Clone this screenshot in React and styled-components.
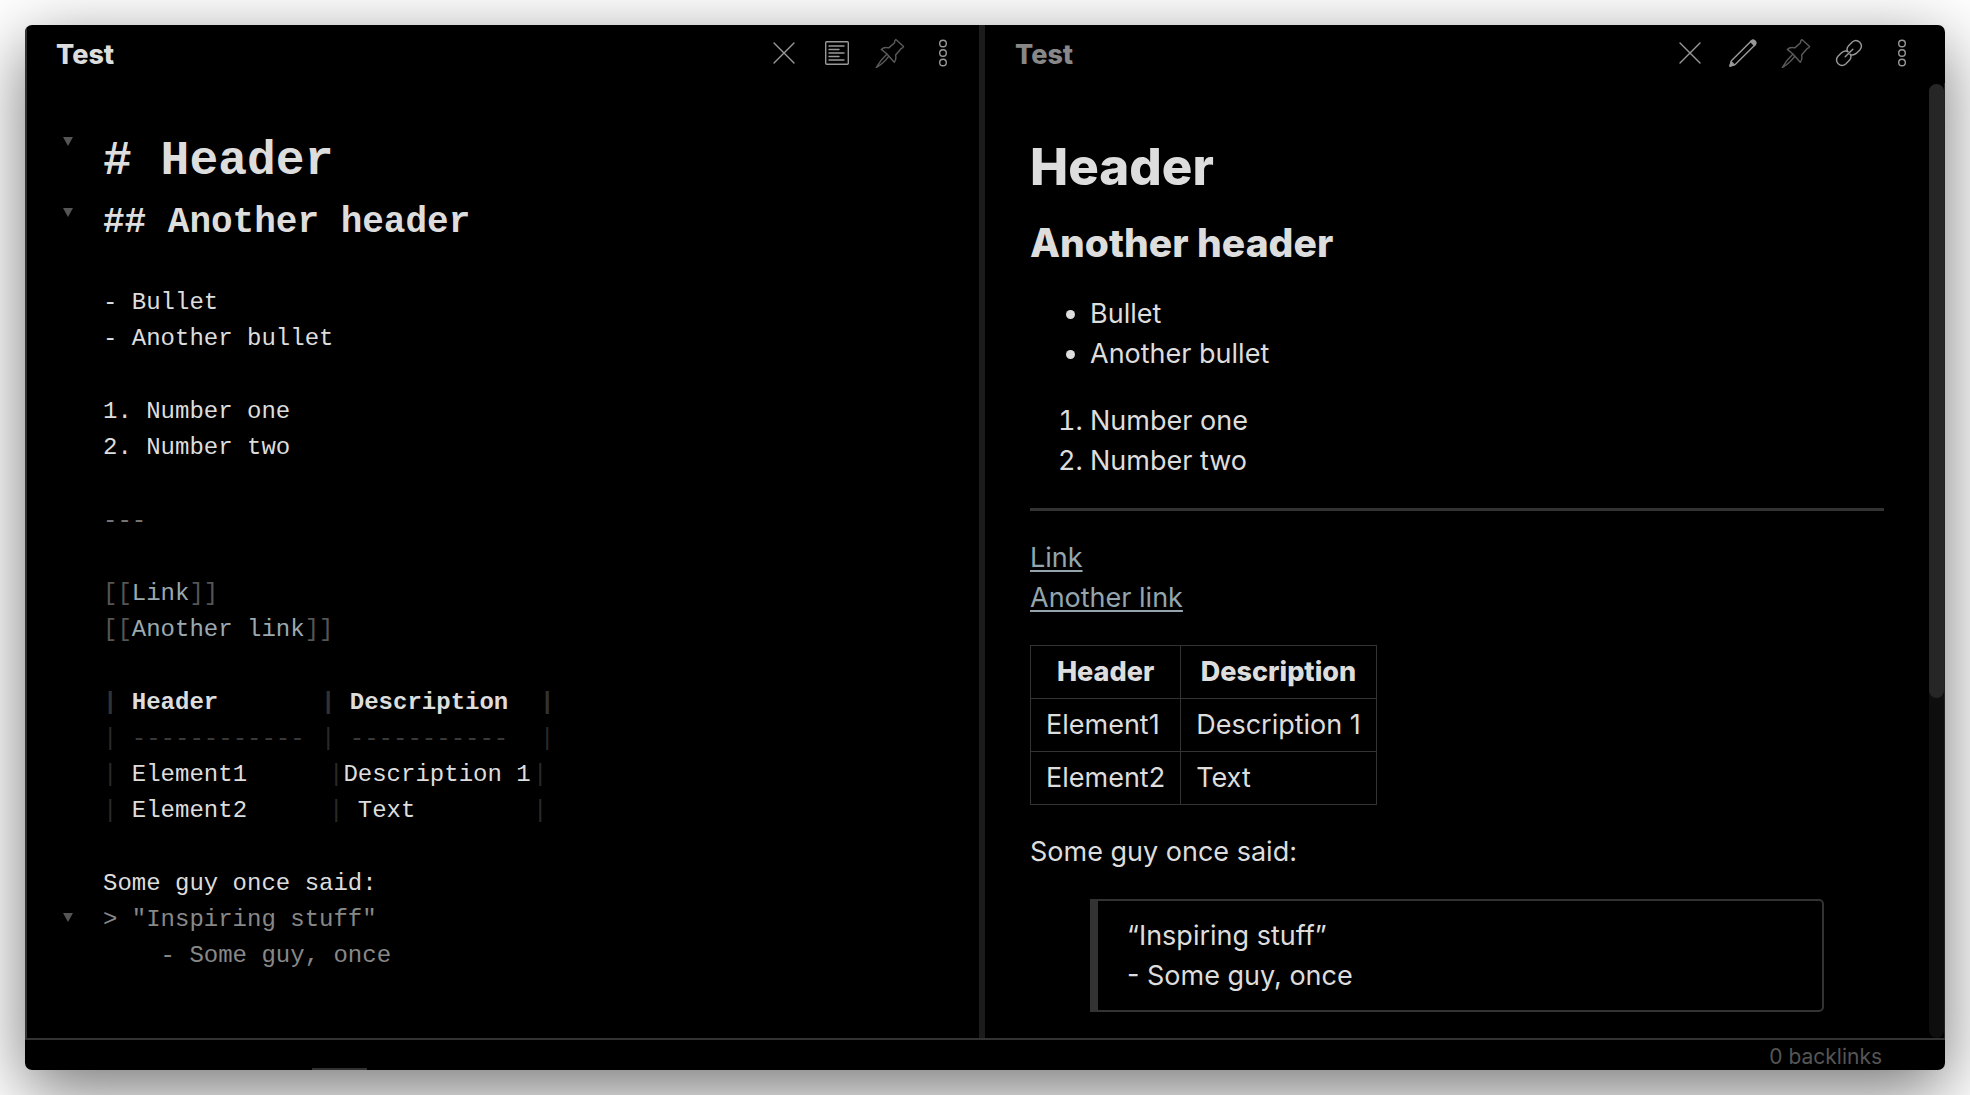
import React from "react";
import styled, { createGlobalStyle } from "styled-components";

const line = "#333333";
const text = "#dddddd";
const sans = `Inter, "Liberation Sans", sans-serif`;
const mono = `"Liberation Mono", "DejaVu Sans Mono", monospace`;

const GlobalStyle = createGlobalStyle`
  *, *::before, *::after { box-sizing: border-box; }
  body { margin: 0; background: #ffffff; font-family: ${sans}; color: ${text}; }
`;

const Page = styled.div`
  display: flex;
  min-height: 100vh;
  padding: 25px;
  overflow: hidden;
`;

const Window = styled.div`
  display: flex;
  flex: 1;
  flex-direction: column;
  overflow: hidden;
  border-radius: 7px;
  background: #000000;
`;

const Shadow = styled.div`
  display: flex;
  flex: 1;
  min-width: 0;
  border-radius: 7px;
  box-shadow: 0 20px 68px rgba(0, 0, 0, 0.55);
`;

const Workspace = styled.main`
  display: grid;
  flex: 1;
  grid-template-columns: 954fr 6px 960fr;
`;

const Divider = styled.div`
  background: #1c1c1c;
`;

const Pane = styled.section`
  display: flex;
  flex-direction: column;
  min-width: 0;
  border-left: ${(p) => (p.$edge ? `2px solid ${line}` : "0")};
`;

const PaneHeader = styled.header`
  display: flex;
  align-items: center;
  justify-content: space-between;
  height: 58px;
  padding: 0 ${(p) => p.$right}px 0 ${(p) => p.$left}px;
`;

const PaneTitle = styled.h2`
  margin: 0;
  padding-top: 2px;
  font-size: 27px;
  line-height: 32px;
  font-weight: 800;
  color: ${(p) => (p.$active ? text : "#888888")};
`;

const Actions = styled.div`
  display: flex;
  gap: 23px;
  padding-bottom: 2px;
`;

const IconButton = styled.button`
  display: flex;
  padding: 0;
  border: 0;
  background: none;
  color: ${(p) => (p.$dim ? "#5a5a5a" : "#999999")};
  cursor: pointer;
`;

const Icon = styled.svg`
  width: 30px;
  height: 30px;
  fill: none;
  stroke: currentColor;
  stroke-width: 1.4;
  stroke-linejoin: round;
  stroke-linecap: round;
`;

const Editor = styled.div`
  padding: 43px 36px 40px;
  font-family: ${mono};
  font-size: 24px;
  line-height: 36px;
`;

const lineStyles = {
  h1: "font-size: 48px; line-height: 71px; font-weight: 700;",
  h2: "font-size: 36px; line-height: 51px; font-weight: 700;",
  quote: "color: #888888;",
  rule: "color: #777777;",
  blank: "height: 37px;",
};

const Line = styled.div`
  display: flex;
  align-items: flex-start;
  white-space: pre;
  ${(p) => lineStyles[p.$kind] || ""}
`;

const Gutter = styled.div`
  flex: none;
  width: 40px;
  padding-top: 11px;
`;

const Fold = styled.button`
  display: block;
  width: 10px;
  height: 9px;
  padding: 0;
  border: 0;
  background: #555555;
  clip-path: polygon(0 0, 100% 0, 50% 100%);
  cursor: pointer;
`;

const Bracket = styled.span`
  color: #555555;
`;

const WikiLink = styled.span`
  color: #9aa9b0;
`;

const SourceCell = styled.span`
  width: ${(p) => p.$width}px;
  font-weight: ${(p) => (p.$head ? 700 : 400)};
`;

const Pipe = styled.span`
  font-weight: ${(p) => (p.$head ? 700 : 400)};
  color: ${(p) => (p.$head ? "#333333" : "#2a2a2a")};
`;

const Dashes = styled.span`
  color: #3a3a3a;
`;

const PreviewRow = styled.div`
  display: flex;
  flex: 1;
  justify-content: space-between;
  padding-top: 1px;
  border-right: 1px solid #222222;
`;

const Preview = styled.article`
  flex: 1;
  min-width: 0;
  padding: 51px 45px 25px;
  font-size: 27px;
  line-height: 40px;
`;

const Heading1 = styled.h1`
  margin: 0 0 20px;
  font-size: 51px;
  line-height: 64px;
  font-weight: 800;
`;

const Heading2 = styled.h2`
  margin: 0 0 27px;
  font-size: 39px;
  line-height: 48px;
  font-weight: 800;
`;

const listCss = `
  margin: 0 0 27px;
  padding-left: 60px;
`;
const BulletList = styled.ul`${listCss}`;
const NumberList = styled.ol`${listCss}`;

const Rule = styled.hr`
  height: 3px;
  margin: 27px 0;
  border: 0;
  background: ${line};
`;

const Paragraph = styled.p`
  margin: 0 0 27px;
`;

const Link = styled.a`
  color: #94a5ad;
  text-decoration: underline;
  text-decoration-thickness: 2px;
  text-underline-offset: 3px;
`;

const Table = styled.table`
  margin: 0 0 27px;
  border-collapse: collapse;
  th, td {
    padding: 6px 15px;
    border: 1px solid ${line};
  }
  th { font-weight: 800; text-align: center; }
`;

const Quote = styled.blockquote`
  margin: 0 60px;
  padding: 15px 29px 14px;
  border: 2px solid ${line};
  border-left-width: 8px;
  border-radius: 0 5px 5px 0;
`;

const ScrollTrack = styled.div`
  width: 15px;
  border-radius: 8px;
  background: #0e0e0e;
`;

const ScrollThumb = styled.div`
  height: 64.4%;
  border-radius: 8px;
  background: #262626;
`;

const StatusBar = styled.footer`
  display: flex;
  align-items: flex-end;
  justify-content: space-between;
  height: 32px;
  padding: 0 63px 0 287px;
  border-top: 2px solid ${line};
  font-size: 21px;
  line-height: 26px;
  color: #555555;
`;

const StatusTab = styled.div`
  width: 55px;
  height: 2px;
  background: ${line};
`;

const StatusText = styled.span`
  padding-bottom: 0;
`;

const icons = {
  close: <path d="M5 5 25 25M25 5 5 25" />,
  preview: (
    <>
      <rect x="3.7" y="3.7" width="22.6" height="22.6" rx="1" />
      <path d="M7 8h15M7 11.5h10M7 15h15M7 18.5h10M7 22h15" />
    </>
  ),
  pin: (
    <path d="M20.8 1.5 28.6 8.4Q28.2 10.3 26.2 10.5L20.6 17Q21.6 21.6 19.3 24.2L13.9 18.2Q9 25 1.3 29.6Q5.5 22 12 16L6.3 11.4Q9 8.6 13.8 9.9L19.6 4.8Q19.3 2.5 20.8 1.5ZM12 16l1.9 2.2" />
  ),
  more: (
    <>
      <circle cx="15" cy="5.5" r="3.3" />
      <circle cx="15" cy="15" r="3.3" />
      <circle cx="15" cy="24.5" r="3.3" />
    </>
  ),
  edit: (
    <>
      <path d="M2 28 3.4 22.8 23 3.2Q25 1.2 26.8 3Q28.8 5 26.9 7L7.2 26.6Z" />
      <path d="M2 28 3.2 23.8 6.2 26.8ZM22.6 3.6Q25 1.2 26.8 3Q28.8 5 26.4 7.4Z" fill="currentColor" />
    </>
  ),
  link: (
    <>
      <path d="M13.6 13.6Q12 10.5 14.6 7.8L18.3 4Q22 .8 25.8 4.2Q29 8 26 11.7L22.2 15.4Q19 18 16 16.4" />
      <path d="M16.4 16.4Q18 19.5 15.4 22.2L11.7 26Q8 29.2 4.2 25.8Q1 22 4 18.3L7.8 14.6Q11 12 14 13.6" />
      <path d="M11.2 18.8 18.8 11.2" />
    </>
  ),
};

function Action({ name, label }) {
  return (
    <IconButton type="button" aria-label={label} $dim={name === "pin"}>
      <Icon viewBox="0 0 30 30" aria-hidden="true">{icons[name]}</Icon>
    </IconButton>
  );
}

function SourceLine({ kind, fold, children }) {
  return (
    <Line $kind={kind}>
      <Gutter>{fold && <Fold type="button" aria-label="Fold section" />}</Gutter>
      {children}
    </Line>
  );
}

function SourceRow({ first, second, widths, head }) {
  return (
    <SourceLine>
      <SourceCell $width={widths[0]} $head={head}><Pipe $head={head}>|</Pipe>{first}</SourceCell>
      <SourceCell $width={widths[1]} $head={head}><Pipe $head={head}>|</Pipe>{second}</SourceCell>
      <Pipe $head={head}>|</Pipe>
    </SourceLine>
  );
}

const headWidths = [218, 219];
const bodyWidths = [226, 204];

export default function App() {
  return (
    <Page>
      <GlobalStyle />
      <Shadow>
        <Window>
          <Workspace>
            <Pane $edge>
              <PaneHeader $left={29} $right={21}>
                <PaneTitle $active>Test</PaneTitle>
                <Actions>
                  <Action name="close" label="Close" />
                  <Action name="preview" label="Preview" />
                  <Action name="pin" label="Pin" />
                  <Action name="more" label="More options" />
                </Actions>
              </PaneHeader>
              <Editor>
                <SourceLine kind="h1" fold># Header</SourceLine>
                <SourceLine kind="h2" fold>## Another header</SourceLine>
                <SourceLine kind="blank" />
                <SourceLine>- Bullet</SourceLine>
                <SourceLine>- Another bullet</SourceLine>
                <SourceLine kind="blank" />
                <SourceLine>1. Number one</SourceLine>
                <SourceLine>2. Number two</SourceLine>
                <SourceLine kind="blank" />
                <SourceLine kind="rule">---</SourceLine>
                <SourceLine kind="blank" />
                <SourceLine><Bracket>[[</Bracket><WikiLink>Link</WikiLink><Bracket>]]</Bracket></SourceLine>
                <SourceLine><Bracket>[[</Bracket><WikiLink>Another link</WikiLink><Bracket>]]</Bracket></SourceLine>
                <SourceLine kind="blank" />
                <SourceRow head widths={headWidths} first=" Header" second=" Description" />
                <SourceRow widths={headWidths} first={<Dashes> ------------</Dashes>} second={<Dashes> -----------</Dashes>} />
                <SourceRow widths={bodyWidths} first=" Element1" second="Description 1" />
                <SourceRow widths={bodyWidths} first=" Element2" second=" Text" />
                <SourceLine kind="blank" />
                <SourceLine>Some guy once said:</SourceLine>
                <SourceLine kind="quote" fold>{'> "Inspiring stuff"'}</SourceLine>
                <SourceLine kind="quote">{"    - Some guy, once"}</SourceLine>
              </Editor>
            </Pane>
            <Divider />
            <Pane>
              <PaneHeader $left={30} $right={28}>
                <PaneTitle>Test</PaneTitle>
                <Actions>
                  <Action name="close" label="Close" />
                  <Action name="edit" label="Edit" />
                  <Action name="pin" label="Pin" />
                  <Action name="link" label="Link with pane" />
                  <Action name="more" label="More options" />
                </Actions>
              </PaneHeader>
              <PreviewRow>
                <Preview>
                  <Heading1>Header</Heading1>
                  <Heading2>Another header</Heading2>
                  <BulletList>
                    <li>Bullet</li>
                    <li>Another bullet</li>
                  </BulletList>
                  <NumberList>
                    <li>Number one</li>
                    <li>Number two</li>
                  </NumberList>
                  <Rule />
                  <Paragraph>
                    <Link href="#link">Link</Link>
                    <br />
                    <Link href="#another-link">Another link</Link>
                  </Paragraph>
                  <Table>
                    <thead>
                      <tr><th>Header</th><th>Description</th></tr>
                    </thead>
                    <tbody>
                      <tr><td>Element1</td><td>Description 1</td></tr>
                      <tr><td>Element2</td><td>Text</td></tr>
                    </tbody>
                  </Table>
                  <Paragraph>Some guy once said:</Paragraph>
                  <Quote>
                    “Inspiring stuff”
                    <br />- Some guy, once
                  </Quote>
                </Preview>
                <ScrollTrack><ScrollThumb /></ScrollTrack>
              </PreviewRow>
            </Pane>
          </Workspace>
          <StatusBar>
            <StatusTab />
            <StatusText>0 backlinks</StatusText>
          </StatusBar>
        </Window>
      </Shadow>
    </Page>
  );
}
